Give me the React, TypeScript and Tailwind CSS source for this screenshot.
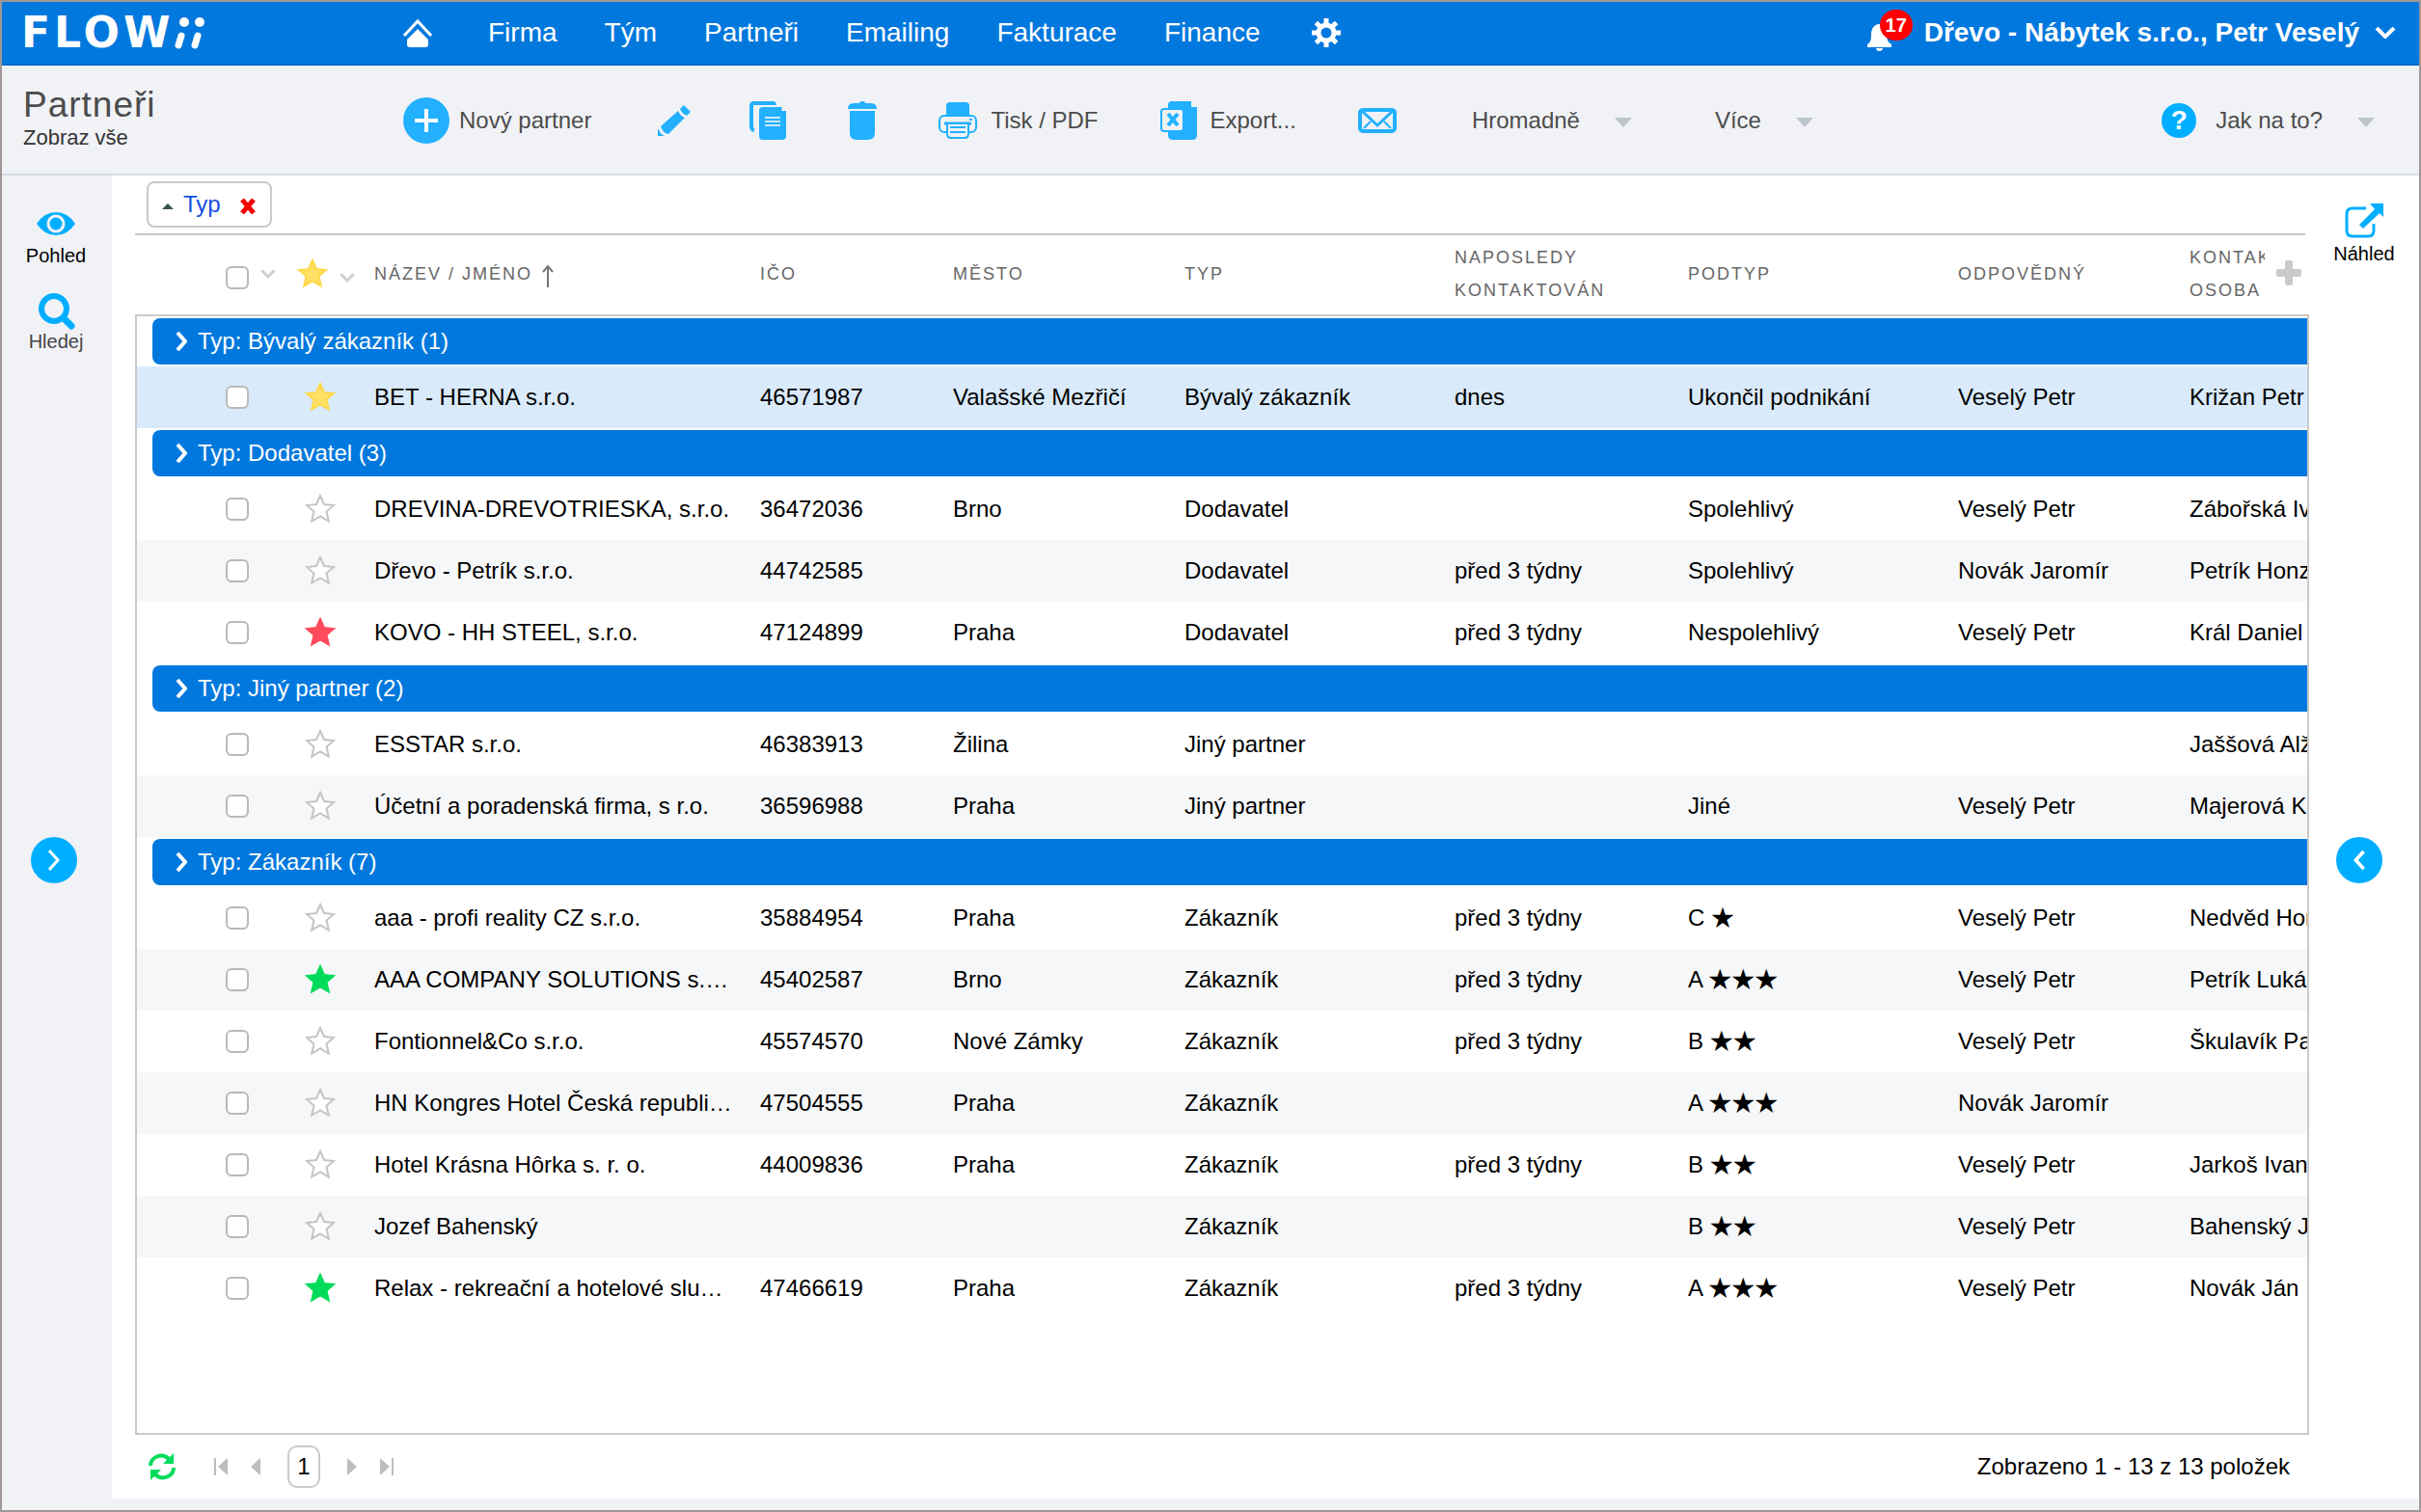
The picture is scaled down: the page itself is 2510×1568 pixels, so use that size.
import type { ReactNode } from "react";

type Flag = "none" | "yellow" | "red" | "green";

type Partner = {
  flag: Flag;
  name: string;
  ico?: string;
  city?: string;
  type: string;
  contacted?: string;
  subtype?: string;
  stars?: number;
  owner?: string;
  contact?: string;
  selected?: boolean;
};

const groups: { title: string; rows: Partner[] }[] = [
  {
    title: "Typ: Bývalý zákazník (1)",
    rows: [
      { flag: "yellow", name: "BET - HERNA s.r.o.", ico: "46571987", city: "Valašské Mezřičí", type: "Bývalý zákazník", contacted: "dnes", subtype: "Ukončil podnikání", owner: "Veselý Petr", contact: "Križan Petr", selected: true },
    ],
  },
  {
    title: "Typ: Dodavatel (3)",
    rows: [
      { flag: "none", name: "DREVINA-DREVOTRIESKA, s.r.o.", ico: "36472036", city: "Brno", type: "Dodavatel", subtype: "Spolehlivý", owner: "Veselý Petr", contact: "Zábořská Iva" },
      { flag: "none", name: "Dřevo - Petrík s.r.o.", ico: "44742585", type: "Dodavatel", contacted: "před 3 týdny", subtype: "Spolehlivý", owner: "Novák Jaromír", contact: "Petrík Honza" },
      { flag: "red", name: "KOVO - HH STEEL, s.r.o.", ico: "47124899", city: "Praha", type: "Dodavatel", contacted: "před 3 týdny", subtype: "Nespolehlivý", owner: "Veselý Petr", contact: "Král Daniel" },
    ],
  },
  {
    title: "Typ: Jiný partner (2)",
    rows: [
      { flag: "none", name: "ESSTAR s.r.o.", ico: "46383913", city: "Žilina", type: "Jiný partner", contact: "Jaššová Alžbeta" },
      { flag: "none", name: "Účetní a poradenská firma, s r.o.", ico: "36596988", city: "Praha", type: "Jiný partner", subtype: "Jiné", owner: "Veselý Petr", contact: "Majerová Katarína" },
    ],
  },
  {
    title: "Typ: Zákazník (7)",
    rows: [
      { flag: "none", name: "aaa - profi reality CZ s.r.o.", ico: "35884954", city: "Praha", type: "Zákazník", contacted: "před 3 týdny", subtype: "C", stars: 1, owner: "Veselý Petr", contact: "Nedvěd Honza" },
      { flag: "green", name: "AAA COMPANY SOLUTIONS s.r.o.", ico: "45402587", city: "Brno", type: "Zákazník", contacted: "před 3 týdny", subtype: "A", stars: 3, owner: "Veselý Petr", contact: "Petrík Lukáš" },
      { flag: "none", name: "Fontionnel&Co s.r.o.", ico: "45574570", city: "Nové Zámky", type: "Zákazník", contacted: "před 3 týdny", subtype: "B", stars: 2, owner: "Veselý Petr", contact: "Škulavík Pavol" },
      { flag: "none", name: "HN Kongres Hotel Česká republika", ico: "47504555", city: "Praha", type: "Zákazník", subtype: "A", stars: 3, owner: "Novák Jaromír" },
      { flag: "none", name: "Hotel Krásna Hôrka s. r. o.", ico: "44009836", city: "Praha", type: "Zákazník", contacted: "před 3 týdny", subtype: "B", stars: 2, owner: "Veselý Petr", contact: "Jarkoš Ivan" },
      { flag: "none", name: "Jozef Bahenský", type: "Zákazník", subtype: "B", stars: 2, owner: "Veselý Petr", contact: "Bahenský Jozef" },
      { flag: "green", name: "Relax - rekreační a hotelové služby", ico: "47466619", city: "Praha", type: "Zákazník", contacted: "před 3 týdny", subtype: "A", stars: 3, owner: "Veselý Petr", contact: "Novák Ján" },
    ],
  },
];

const starColor: Record<Flag, string> = {
  none: "fill-white stroke-[#c4c4c4]",
  yellow: "fill-[#ffe063] stroke-[#ffd84a]",
  red: "fill-[#ff4b5c] stroke-[#ff4b5c]",
  green: "fill-[#00dc5a] stroke-[#00dc5a]",
};

function Star({ flag }: { flag: Flag }) {
  return (
    <svg viewBox="0 0 32 32" className={`block h-8 w-8 ${starColor[flag]}`} strokeWidth="2">
      <path d="M16 2l4 9 10 1-7.500 6.500 2.300 10L16 23.300 7.200 28.500l2.300-10L2 12l10-1z" />
    </svg>
  );
}

function Checkbox({ label }: { label: string }) {
  return (
    <input
      type="checkbox"
      aria-label={label}
      className="block h-6 w-6 appearance-none rounded-md border-2 border-[#b9b9b9] bg-white"
    />
  );
}

function Chevron({ className }: { className: string }) {
  return (
    <svg viewBox="0 0 22 12" className={className} fill="none" strokeWidth="4">
      <path d="M2 1l9 9 9-9" />
    </svg>
  );
}

function Caret() {
  return (
    <svg viewBox="0 0 18 10" className="mt-1 h-[10px] w-[18px] fill-[#bcc5cc]">
      <path d="M0 0h18L9 10z" />
    </svg>
  );
}

function ToolButton({ icon, label, title, gap = "gap-[14px]" }: { icon: ReactNode; label?: string; title?: string; gap?: string }) {
  return (
    <button type="button" aria-label={label ? undefined : title} className={`flex items-center ${gap} whitespace-nowrap`}>
      {icon}
      {label && <span>{label}</span>}
    </button>
  );
}

function Columns() {
  return (
    <colgroup>
      <col className="w-[160px]" />
      <col className="w-[76px]" />
      <col className="w-[400px]" />
      <col className="w-[200px]" />
      <col className="w-[240px]" />
      <col className="w-[280px]" />
      <col className="w-[242px]" />
      <col className="w-[280px]" />
      <col className="w-[240px]" />
      <col className="w-[200px]" />
    </colgroup>
  );
}

function TopBar() {
  return (
    <header className="flex h-[66px] items-center border-b-2 border-[#006bcb] bg-[#0078dd] pr-6 pl-5 text-[28px] text-white">
      <a href="#" aria-label="FLOWii" className="flex w-[395px] items-center">
        <span className="font-['DejaVu_Sans','Liberation_Sans',sans-serif] text-[44px] leading-none font-bold tracking-[4px]">FLOW</span>
        <svg viewBox="0 0 32 34" className="h-[34px] w-8">
          <g className="fill-white">
            <circle cx="11" cy="6" r="5" />
            <circle cx="27" cy="6" r="5" />
          </g>
          <g className="stroke-white" strokeWidth="7" strokeLinecap="round">
            <path d="M8 20l-3 10" />
            <path d="M25 20l-3 10" />
          </g>
        </svg>
      </a>
      <nav className="flex flex-1 items-center gap-[49px]">
        <a href="#" aria-label="Domů" className="mr-2">
          <svg viewBox="0 0 32 32" className="block h-8 w-8">
            <path d="M2 19L16 4l14 15" fill="none" className="stroke-white" strokeWidth="3" />
            <path d="M16 12l11 11v5q0 3-3 3H8q-3 0-3-3v-5z" className="fill-white" />
          </svg>
        </a>
        <a href="#">Firma</a>
        <a href="#">Tým</a>
        <a href="#">Partneři</a>
        <a href="#">Emailing</a>
        <a href="#">Fakturace</a>
        <a href="#">Finance</a>
        <a href="#" aria-label="Nastavení" className="pl-[3px]">
          <svg viewBox="0 0 32 32" className="block h-8 w-8 stroke-white" fill="none">
            <circle cx="16" cy="16" r="8" strokeWidth="5" />
            <path d="M16 1v6M16 25v6M1 16h6M25 16h6M5.400 5.400l4.200 4.200M22.400 22.400l4.200 4.200M5.400 26.600l4.200-4.200M22.400 9.600l4.200-4.200" strokeWidth="5" />
          </svg>
        </a>
      </nav>
      <button type="button" aria-label="Upozornění" className="relative mr-3 h-12 w-12">
        <svg viewBox="0 0 28 28" className="mt-[10px] h-7 w-7 fill-white">
          <path d="M13 0c6 0 8 5 8 11 0 6 2 8 5 10v3H1v-3c3-2 4-4 4-10C5 5 8 0 13 0zM10 25h7c0 4-7 4-7 0z" />
        </svg>
        <span className="absolute top-0 right-0 flex h-8 w-[34px] items-center justify-center rounded-full bg-[#ff0000] text-xl font-bold">17</span>
      </button>
      <button type="button" className="flex items-center gap-4 font-bold whitespace-nowrap">
        Dřevo - Nábytek s.r.o., Petr Veselý
        <Chevron className="h-3 w-[22px] stroke-white" />
      </button>
    </header>
  );
}

function Toolbar() {
  return (
    <div className="flex h-[114px] items-center border-b-2 border-[#d4dde8] bg-[#f1f2f6] pt-[2px] pr-[46px] pl-[22px] text-2xl text-[#4c4c4c]">
      <div className="w-[394px] pb-[6px]">
        <h1 className="text-[37px] leading-[42px] tracking-[1px]">Partneři</h1>
        <p className="text-[22px] leading-[26px] text-[#333]">Zobraz vše</p>
      </div>
      <div className="flex flex-1 items-center gap-16">
        <ToolButton
          gap="gap-[10px]"
          label="Nový partner"
          icon={
            <svg viewBox="0 0 48 48" className="h-12 w-12">
              <circle cx="24" cy="24" r="24" className="fill-[#22b0ff]" />
              <path d="M24 12v24M12 24h24" className="stroke-white" strokeWidth="4" />
            </svg>
          }
        />
        <ToolButton
          title="Upravit"
          icon={
            <svg viewBox="0 0 36 36" className="h-9 w-9 overflow-visible fill-[#22b0ff]">
              <path d="M32 2l7 7-4 4q-5-2-7-7zM26 8q2 5 7 7L16 32q-6-1-8-8zM6 27q1 5 6 7H5v-7z" />
            </svg>
          }
        />
        <ToolButton
          title="Kopírovat"
          icon={
            <svg viewBox="0 0 38 40" className="h-10 w-[38px]">
              <path d="M5 30q-3-.5-3-4V5q0-3 3-3h19q2 0 2 2" fill="none" className="stroke-[#22b0ff]" strokeWidth="4" />
              <path d="M14 6h19.500v4H38v26q0 4-4 4H14q-4 0-4-4V10q0-4 4-4z" className="fill-[#22b0ff]" />
              <path d="M16 17h16M16 21h16M16 25h16" className="stroke-[#c8e9fb]" strokeWidth="2" />
            </svg>
          }
        />
        <ToolButton
          title="Smazat"
          icon={
            <svg viewBox="0 0 30 40" className="h-10 w-[30px] fill-[#22b0ff]">
              <path d="M0 8q0-6 6-6h6q0-2 3-2t3 2h6q6 0 6 6zM2 10h26v23q0 7-7 7H9q-7 0-7-7z" />
            </svg>
          }
        />
        <ToolButton
          label="Tisk / PDF"
          icon={
            <svg viewBox="0 0 40 38" className="h-[38px] w-10">
              <path d="M8 14V4q0-4 4-4h16q4 0 4 4v10z" className="fill-[#22b0ff]" />
              <rect x="1" y="14" width="38" height="17" rx="5" className="fill-[#f1f2f6] stroke-[#22b0ff]" strokeWidth="2" />
              <path d="M6 22h28" className="stroke-[#22b0ff]" strokeWidth="3" />
              <path d="M9 22h22v11q0 4-4 4H13q-4 0-4-4z" className="fill-[#f1f2f6] stroke-[#22b0ff]" strokeWidth="2" />
              <path d="M12 26h16M12 31h16" className="stroke-[#22b0ff]" strokeWidth="2" />
              <path d="M32 18h3" className="stroke-[#22b0ff]" strokeWidth="2" />
            </svg>
          }
        />
        <ToolButton
          label="Export..."
          icon={
            <svg viewBox="0 0 38 40" className="h-10 w-[38px]">
              <path d="M12 0h20v6h6v29q0 5-5 5H13q-5 0-5-5V4q0-4 4-4z" className="fill-[#22b0ff]" />
              <rect x="1" y="8" width="23" height="23" rx="3" className="fill-[#f1f2f6] stroke-[#22b0ff]" strokeWidth="2" />
              <path d="M8 13l10 12M18 13L8 25" className="stroke-[#22b0ff]" strokeWidth="4" />
            </svg>
          }
        />
        <ToolButton
          title="E-mail"
          icon={
            <svg viewBox="0 0 40 26" className="h-[26px] w-10 stroke-[#22b0ff]" fill="none">
              <rect x="2" y="2" width="36" height="22" rx="3" strokeWidth="4" />
              <path d="M4 3l16 15L36 3" strokeWidth="3" />
              <path d="M6 21l7-7M34 21l-7-7" strokeWidth="2" />
            </svg>
          }
        />
        <div className="flex items-center gap-[86px] pl-[14px]">
          <button type="button" className="flex items-center gap-9">
            Hromadně
            <Caret />
          </button>
          <button type="button" className="flex items-center gap-9">
            Více
            <Caret />
          </button>
        </div>
      </div>
      <button type="button" className="flex items-center whitespace-nowrap">
        <span className="mr-5 flex h-9 w-9 items-center justify-center rounded-full bg-[#00aeff] text-[28px] font-bold text-white">?</span>
        <span className="mr-9">Jak na to?</span>
        <Caret />
      </button>
    </div>
  );
}

function LeftRail() {
  return (
    <aside className="flex w-[114px] flex-col items-center bg-[#f1f2f6] pt-9 pr-[2px] text-xl text-black">
      <button type="button" className="flex flex-col items-center gap-[7px]">
        <svg viewBox="0 0 40 28" className="h-7 w-10">
          <path d="M0 14Q8 2 20 2t20 12q-8 12-20 12T0 14z" className="fill-[#00aeff]" />
          <circle cx="20" cy="14" r="8" className="fill-[#00aeff] stroke-[#f1f2f6]" strokeWidth="3" />
        </svg>
        <span className="leading-6">Pohled</span>
      </button>
      <button type="button" className="mt-[25px] flex flex-col items-center text-[#444]">
        <svg viewBox="0 0 40 40" className="h-10 w-10 stroke-[#00aeff]" fill="none">
          <circle cx="18" cy="18" r="13" strokeWidth="6" />
          <path d="M28 28l8 8" strokeWidth="7" strokeLinecap="round" />
        </svg>
        <span className="leading-6">Hledej</span>
      </button>
      <div className="flex flex-1 items-center pr-1 pb-[148px]">
        <button type="button" aria-label="Rozbalit levý panel" className="flex h-12 w-12 items-center justify-center rounded-full bg-[#00aeff]">
          <svg viewBox="0 0 12 22" className="h-[22px] w-3 stroke-white" fill="none" strokeWidth="3">
            <path d="M1 1l9 10-9 10" />
          </svg>
        </button>
      </div>
    </aside>
  );
}

function RightRail() {
  return (
    <aside className="flex w-[114px] flex-col items-center pt-[29px] text-xl text-black">
      <button type="button" className="flex flex-col items-center gap-[2px]">
        <svg viewBox="0 0 40 36" className="h-9 w-10">
          <path d="M22 5H8q-6 0-6 6v17q0 6 6 6h16q6 0 6-6v-7" fill="none" className="stroke-[#00aeff]" strokeWidth="3" />
          <path d="M26 0h14v14l-4-4-17 16-4-4L31 6z" className="fill-[#00aeff]" />
        </svg>
        <span className="leading-7">Náhled</span>
      </button>
      <div className="flex flex-1 items-center pr-[10px] pb-12">
        <button type="button" aria-label="Rozbalit pravý panel" className="flex h-12 w-12 items-center justify-center rounded-full bg-[#00aeff]">
          <svg viewBox="0 0 12 22" className="h-5 w-3 stroke-white" fill="none" strokeWidth="4">
            <path d="M11 1l-9 10 9 10" />
          </svg>
        </button>
      </div>
    </aside>
  );
}

function GridHead() {
  const th = "pl-[10px] text-left font-normal";
  return (
    <div className="relative mr-1 overflow-hidden border-t-2 border-[#cacaca] pl-[2px]">
      <table className="w-[2318px] table-fixed border-collapse text-lg leading-[34px] tracking-[2px] text-[#666]">
        <Columns />
        <thead>
          <tr className="h-[82px] [&>th]:pb-[2px]">
            <th className="font-normal">
              <div className="flex items-center gap-3 pt-2 pl-[92px]">
                <Checkbox label="Vybrat vše" />
                <Chevron className="-mt-2 h-[10px] w-4 stroke-[#cfcfcf]" />
              </div>
            </th>
            <th className="font-normal">
              <div className="flex items-center gap-3 pl-[6px]">
                <Star flag="yellow" />
                <Chevron className="mt-2 h-[10px] w-4 shrink-0 stroke-[#cfcfcf]" />
              </div>
            </th>
            <th className={th}>
              <div className="flex items-center gap-[10px]">
                NÁZEV / JMÉNO
                <svg viewBox="0 0 12 24" className="mt-1 h-6 w-3 stroke-[#777]" fill="none" strokeWidth="2">
                  <path d="M6 24V2M1 8l5-6 5 6" />
                </svg>
              </div>
            </th>
            <th className={th}>IČO</th>
            <th className={th}>MĚSTO</th>
            <th className={th}>TYP</th>
            <th className={th}>
              NAPOSLEDY
              <br />
              KONTAKTOVÁN
            </th>
            <th className={th}>PODTYP</th>
            <th className={th}>ODPOVĚDNÝ</th>
            <th className={th}>
              KONTAKTNÍ
              <br />
              OSOBA
            </th>
          </tr>
        </thead>
      </table>
      <button type="button" aria-label="Přidat sloupec" className="absolute inset-y-0 right-0 flex w-[42px] items-center justify-end bg-white pr-1 pb-1">
        <svg viewBox="0 0 26 26" className="h-[26px] w-[26px] fill-[#cacaca]">
          <path d="M11 0h4q2 0 2 2v7h7q2 0 2 2v4q0 2-2 2h-7v7q0 2-2 2h-4q-2 0-2-2v-7H2q-2 0-2-2v-4q0-2 2-2h7V2q0-2 2-2z" />
        </svg>
      </button>
    </div>
  );
}

function GridBody() {
  const td = "overflow-hidden pl-[10px] whitespace-nowrap";
  return (
    <div className="flex-1 overflow-hidden border-2 border-[#cacaca]">
      <table className="w-[2318px] table-fixed border-collapse text-2xl text-black">
        <Columns />
        {groups.map((group) => (
          <tbody key={group.title}>
            <tr>
              <td colSpan={10} className="h-[52px] py-[2px] pr-0 pl-4">
                <button type="button" className="flex h-12 w-full items-center gap-[11px] rounded-l-lg bg-[#0078dd] pl-6 text-white">
                  <svg viewBox="0 0 12 20" className="h-5 w-3 stroke-white" fill="none" strokeWidth="4">
                    <path d="M2 1l8 9-8 9" />
                  </svg>
                  {group.title}
                </button>
              </td>
            </tr>
            {group.rows.map((row, i) => (
              <tr key={row.name} className={`h-16 ${row.selected ? "bg-[#d9eafa]" : i % 2 ? "bg-[#f6f7f9]" : "bg-white"}`}>
                <td className="pl-[92px]">
                  <Checkbox label={row.name} />
                </td>
                <td className="pl-[14px]">
                  <Star flag={row.flag} />
                </td>
                <td className="truncate pr-[18px] pl-[10px]">{row.name}</td>
                <td className={td}>{row.ico}</td>
                <td className={td}>{row.city}</td>
                <td className={td}>{row.type}</td>
                <td className={td}>{row.contacted}</td>
                <td className={td}>
                  {row.subtype}
                  {row.stars && (
                    <>
                      {" "}
                      <span className="font-['Noto_Sans_CJK_JP',sans-serif] leading-none">{"★".repeat(row.stars)}</span>
                    </>
                  )}
                </td>
                <td className={td}>{row.owner}</td>
                <td className={td}>{row.contact}</td>
              </tr>
            ))}
          </tbody>
        ))}
      </table>
    </div>
  );
}

function Pager() {
  return (
    <footer className="flex h-[66px] items-center pr-5 pl-[14px] text-2xl text-black">
      <button type="button" aria-label="Obnovit" className="mr-10">
        <svg viewBox="0 0 28 28" className="block h-7 w-7">
          <g className="fill-[#00dc5a]">
            <path d="M26 0v11H15zM2 28V17h11z" />
          </g>
          <g className="stroke-[#00dc5a]" fill="none" strokeWidth="4">
            <path d="M2 13C2 4 14-1 21 6M26 15c0 9-12 14-19 7" />
          </g>
        </svg>
      </button>
      <button type="button" aria-label="První stránka" className="mr-6">
        <svg viewBox="0 0 14 18" className="block h-[18px] w-[14px] fill-[#bdbdbd]">
          <path d="M0 0h2v18H0zM14 0v18L4 9z" />
        </svg>
      </button>
      <button type="button" aria-label="Předchozí stránka" className="mr-7">
        <svg viewBox="0 0 10 18" className="block h-[18px] w-[10px] fill-[#bdbdbd]">
          <path d="M10 0v18L0 9z" />
        </svg>
      </button>
      <button type="button" aria-current="page" className="mr-7 h-11 w-[34px] rounded-[10px] border-2 border-[#cacaca]">
        1
      </button>
      <button type="button" aria-label="Další stránka" className="mr-6">
        <svg viewBox="0 0 10 18" className="block h-[18px] w-[10px] fill-[#bdbdbd]">
          <path d="M0 0v18l10-9z" />
        </svg>
      </button>
      <button type="button" aria-label="Poslední stránka">
        <svg viewBox="0 0 14 18" className="block h-[18px] w-[14px] fill-[#bdbdbd]">
          <path d="M12 0h2v18h-2zM0 0v18l10-9z" />
        </svg>
      </button>
      <p className="ml-auto">Zobrazeno 1 - 13 z 13 položek</p>
    </footer>
  );
}

export default function App() {
  return (
    <div className="flex min-h-screen flex-col border-2 border-[#a09896] bg-white font-['Liberation_Sans',Arial,sans-serif]">
      <TopBar />
      <Toolbar />
      <div className="flex flex-1">
        <LeftRail />
        <div className="flex min-w-0 flex-1 flex-col border-b-[12px] border-[#f1f2f6]">
          <div className="flex flex-1">
            <main className="flex min-w-0 flex-1 flex-col pl-6">
              <div className="py-[6px] pl-3">
                <div className="flex h-12 w-[130px] items-center rounded-lg border-2 border-[#cacaca] pl-[14px] text-2xl">
                  <svg viewBox="0 0 12 6" className="mt-1 mr-[10px] h-[6px] w-3 fill-[#3c5058]">
                    <path d="M0 6h12L6 0z" />
                  </svg>
                  <a href="#" className="text-[#1450dc]">Typ</a>
                  <button type="button" aria-label="Zrušit seskupení" className="ml-5">
                    <svg viewBox="0 0 16 16" className="mt-1 block h-4 w-4 stroke-[#f00000]" strokeWidth="5">
                      <path d="M2 1l12 14M14 1L2 15" />
                    </svg>
                  </button>
                </div>
              </div>
              <GridHead />
              <GridBody />
              <Pager />
            </main>
            <RightRail />
          </div>
        </div>
      </div>
    </div>
  );
}
